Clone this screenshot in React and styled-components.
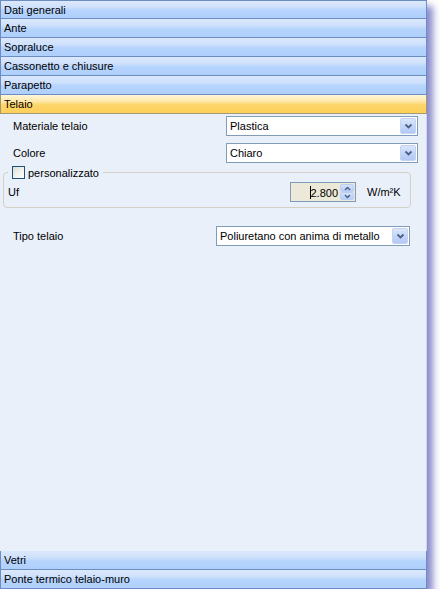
import React from 'react';
import styled, { createGlobalStyle } from 'styled-components';

const Global = createGlobalStyle`
  html, body { margin: 0; padding: 0; background: #ffffff; }
  body { font-family: "Liberation Sans", Arial, sans-serif; font-size: 11px; color: #000; }
`;

const Window = styled.div`
  width: 427px;
  height: 589px;
  display: flex;
  flex-direction: column;
  background: #eaf0fa;
  box-shadow: 6px 6px 7px 0 rgba(60, 60, 170, 0.6);
`;

const Header = styled.div`
  height: 18px;
  flex: none;
  display: flex;
  align-items: center;
  padding-left: 3px;
  border: 1px solid ${p => (p.$active ? '#a09a78' : '#6b8dc2')};
  border-top: none;
  background: ${p =>
    p.$active
      ? 'linear-gradient(to bottom, #fff6dc 0%, #ffe8a8 35%, #fed568 55%, #fdd05a 100%)'
      : 'linear-gradient(to bottom, #dbe8fc 0%, #cfe1fc 35%, #b6d4fd 55%, #afcffc 100%)'};
  color: #000;
  &:first-child { border-top: 1px solid #6b8dc2; height: 17px; }
`;

const Body = styled.div`
  flex: 1;
  padding-top: 2px;
  display: flex;
  flex-direction: column;
  border-right: 1px solid #c9d6ee;
`;

const Row = styled.div`
  display: flex;
  align-items: center;
  height: 20px;
  padding-left: 13px;
  padding-right: ${p => p.$right}px;
  margin-top: ${p => p.$top || 0}px;
`;

const Select = styled.div`
  margin-left: auto;
  width: ${p => p.$width}px;
  height: 20px;
  box-sizing: border-box;
  border: 1px solid #7f9db9;
  background: #fff;
  display: flex;
  align-items: center;
  padding-left: 3px;
  padding-right: 1px;
`;

const SelectText = styled.span`
  flex: 1;
`;

const DropButton = styled.div`
  width: 16px;
  height: 16px;
  border-radius: 2px;
  background: linear-gradient(to bottom, #dbe6fb 0%, #c3d5f8 50%, #b3c9f4 100%);
  border: 1px solid #c2d3f3;
  box-sizing: border-box;
  display: flex;
  align-items: center;
  justify-content: center;
`;

const Group = styled.fieldset`
  margin: 3px 15px 0 3px;
  padding: 0 0 5px 4px;
  border: 1px solid #d3d1c6;
  border-radius: 4px;
  min-width: 0;
`;

const Legend = styled.legend`
  padding: 0 4px;
  display: flex;
  align-items: center;
  gap: 3px;
`;

const Check = styled.span`
  width: 11px;
  height: 11px;
  border: 1px solid #1c5180;
  background: linear-gradient(135deg, #dcdcd6 0%, #f4f4f0 60%, #ffffff 100%);
`;

const UfRow = styled.div`
  display: flex;
  align-items: center;
  height: 20px;
  margin-top: 3px;
`;

const Spin = styled.div`
  margin-left: auto;
  width: 66px;
  height: 20px;
  box-sizing: border-box;
  border: 1px solid #7f9db9;
  background: #ece9d8;
  display: flex;
  align-items: center;
  padding-right: 1px;
`;

const SpinValue = styled.span`
  flex: 1;
  text-align: right;
  padding-right: 2px;
`;

const Caret = styled.span`
  display: inline-block;
  width: 1px;
  height: 13px;
  background: #000;
  vertical-align: -2px;
  margin-right: -1px;
`;

const SpinButtons = styled.div`
  width: 14px;
  height: 16px;
  display: flex;
  flex-direction: column;
`;

const SpinBtn = styled.div`
  flex: 1;
  border-radius: 2px;
  background: linear-gradient(to bottom, #d6e3fb 0%, #b5ccf5 100%);
  border: 1px solid #bccff2;
  box-sizing: border-box;
  display: flex;
  align-items: center;
  justify-content: center;
`;

const Unit = styled.span`
  width: 54px;
  padding-left: 11px;
  box-sizing: border-box;
`;

const Spacer = styled.div`
  flex: 1;
`;

const Chevron = ({ up }) => (
  <svg width="9" height="6" viewBox="0 0 9 6">
    <path
      d={up ? 'M1.5 4.5 L4.5 1.5 L7.5 4.5' : 'M1.5 1.5 L4.5 4.5 L7.5 1.5'}
      fill="none"
      stroke="#4d6185"
      strokeWidth="1.8"
    />
  </svg>
);

const SmallChevron = ({ up }) => (
  <svg width="7" height="5" viewBox="0 0 7 5">
    <path
      d={up ? 'M1 4 L3.5 1.5 L6 4' : 'M1 1 L3.5 3.5 L6 1'}
      fill="none"
      stroke="#4d6185"
      strokeWidth="1.5"
    />
  </svg>
);

function Combo({ value, width }) {
  return (
    <Select $width={width}>
      <SelectText>{value}</SelectText>
      <DropButton><Chevron /></DropButton>
    </Select>
  );
}

const topSections = ['Dati generali', 'Ante', 'Sopraluce', 'Cassonetto e chiusure', 'Parapetto'];

export default function App() {
  return (
    <>
      <Global />
      <Window>
        {topSections.map(s => <Header key={s}>{s}</Header>)}
        <Header $active>Telaio</Header>
        <Body>
          <Row $right={8}>
            <span>Materiale telaio</span>
            <Combo value="Plastica" width={192} />
          </Row>
          <Row $right={8} $top={7}>
            <span>Colore</span>
            <Combo value="Chiaro" width={192} />
          </Row>
          <Group>
            <Legend>
              <Check />
              <span>personalizzato</span>
            </Legend>
            <UfRow>
              <span>Uf</span>
              <Spin>
                <SpinValue><Caret />2.800</SpinValue>
                <SpinButtons>
                  <SpinBtn><SmallChevron up /></SpinBtn>
                  <SpinBtn><SmallChevron /></SpinBtn>
                </SpinButtons>
              </Spin>
              <Unit>W/m²K</Unit>
            </UfRow>
          </Group>
          <Row $right={16} $top={18}>
            <span>Tipo telaio</span>
            <Combo value="Poliuretano con anima di metallo" width={194} />
          </Row>
          <Spacer />
        </Body>
        <Header>Vetri</Header>
        <Header>Ponte termico telaio-muro</Header>
      </Window>
    </>
  );
}
